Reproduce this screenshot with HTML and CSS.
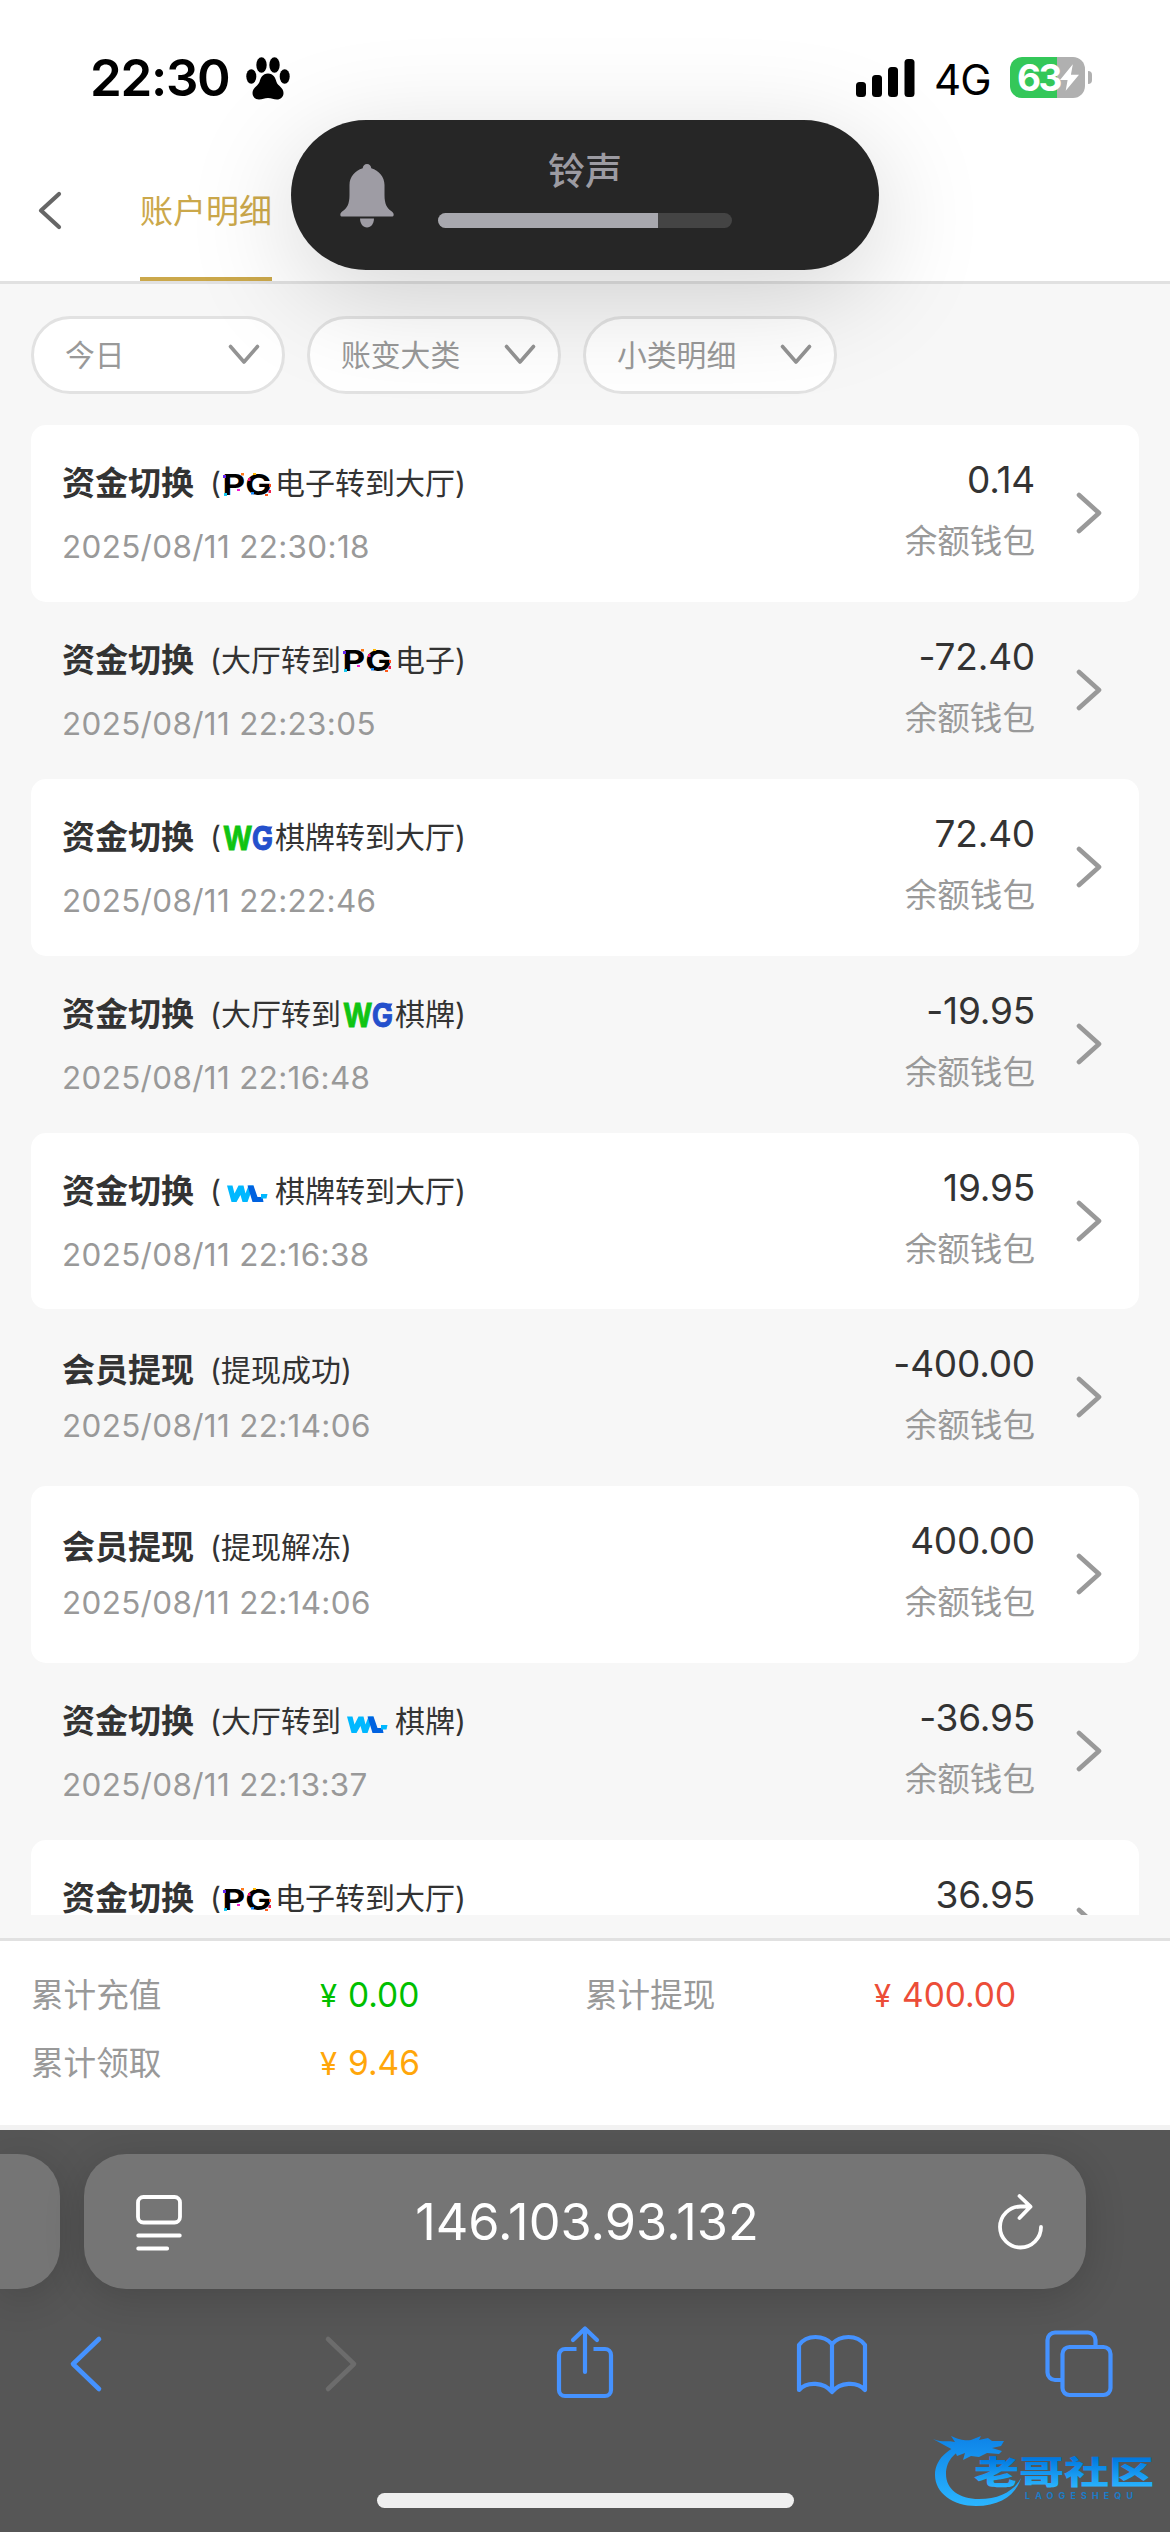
FILE: index.html
```html
<!DOCTYPE html>
<html lang="zh-CN">
<head>
<meta charset="utf-8">
<title>账户明细</title>
<link rel="stylesheet" href="styles.css">
</head>
<body>
<svg class="defs" width="0" height="0" aria-hidden="true">
  <defs>
    <linearGradient id="gw" x1="0" y1="0" x2="1" y2="0"><stop offset="0" stop-color="#12d812"/><stop offset="1" stop-color="#0aa80e"/></linearGradient>
    <linearGradient id="gg" x1="0" y1="0" x2="1" y2="1"><stop offset="0" stop-color="#1533b4"/><stop offset="1" stop-color="#3470ea"/></linearGradient>
    <linearGradient id="gm" gradientUnits="userSpaceOnUse" x1="0" y1="0" x2="0" y2="76"><stop offset="0" stop-color="#0a7fe6"/><stop offset="1" stop-color="#2bb5ff"/></linearGradient>
    <linearGradient id="gt" gradientUnits="userSpaceOnUse" x1="0" y1="28" x2="0" y2="58"><stop offset="0" stop-color="#0078e0"/><stop offset="1" stop-color="#2bb5ff"/></linearGradient>
  </defs>
  <symbol id="pg-dots" viewBox="0 0 50 32">
    <rect x="0" y="6" width="3" height="3" fill="#6a28f0"/><rect x="18" y="4" width="3" height="2.500" fill="#ff7a1a"/>
    <rect x="1" y="24" width="3" height="3" fill="#18c8f0"/><rect x="14" y="20" width="3" height="2" fill="#f01ad0"/>
    <rect x="30" y="4" width="3" height="2" fill="#ffb800"/><rect x="25" y="9" width="2.500" height="3" fill="#f0188c"/>
    <rect x="28" y="23" width="3" height="2.500" fill="#1a8cff"/><rect x="42" y="25" width="3" height="2" fill="#ff5a1a"/><rect x="46" y="15" width="2" height="3" fill="#ff4a1a"/><rect x="45.500" y="21" width="2.500" height="3" fill="#f0204c"/>
  </symbol>
  <symbol id="wl" viewBox="0 0 50 32">
    <path d="M4 9.500h5.500l2 8 4-8h5l2 8 3-8h5l-6 16.500h-5l-2-7-4 7H8.500z" fill="#00b8ff"/>
    <path d="M24.500 9.500h6l4 11.500h5l1 5H29.500z" fill="#0062e0"/>
    <path d="M38 18h6.500l-1 4.500H38z" fill="#00b8ff"/>
  </symbol>
  <symbol id="next" viewBox="0 0 26 42"><path d="M3 3l20 18L3 39" fill="none" stroke="#999" stroke-width="4.600" stroke-linecap="round" stroke-linejoin="round"/></symbol>
  <symbol id="down" viewBox="0 0 32 22"><path d="M2.500 2.500l13.500 15.500L29.500 2.500" fill="none" stroke="#939393" stroke-width="3.600" stroke-linecap="round" stroke-linejoin="round"/></symbol>
</svg>

<div class="status">
  <span class="time">22:30</span>
  <svg class="paw" viewBox="0 0 44 43"><ellipse cx="15.500" cy="8" rx="5.200" ry="7.800"/><ellipse cx="28.500" cy="8" rx="5.200" ry="7.800"/><ellipse cx="5.300" cy="19.500" rx="5" ry="7.300"/><ellipse cx="38.700" cy="19.500" rx="5" ry="7.300"/><path d="M22 16.500c5.500 0 7.500 4.500 8.500 8.500 1.500 4 7 5.500 7 11 0 4-3 6.500-6.500 6.500-3.500 0-5.500-1.500-9-1.500s-5.500 1.500-9 1.500c-3.500 0-6.500-2.500-6.500-6.500 0-5.500 5.500-7 7-11 1-4 3-8.500 8.500-8.500z"/></svg>
  <div class="status-right">
    <svg class="signal" viewBox="0 0 59 38"><rect x="0" y="23" width="10" height="15" rx="3.500"/><rect x="16" y="16" width="10" height="22" rx="3.500"/><rect x="32" y="8" width="10" height="30" rx="3.500"/><rect x="48.500" y="0" width="10" height="38" rx="3.500"/></svg>
    <span class="net">4G</span>
    <div class="battery"><span>63</span><svg viewBox="0 0 20 28"><path d="M13.500 0L0 16.500h8L6 28 20 11h-8.500z" fill="#fff"/></svg></div>
    <i class="nub"></i>
  </div>
</div>

<header class="header">
  <svg class="back" viewBox="0 0 26 42"><path d="M22 4L4 20.500 22 37" fill="none" stroke="#666" stroke-width="4.200" stroke-linecap="round" stroke-linejoin="round"/></svg>
  <span class="tab">账户明细</span>
</header>

<div class="filters">
  <div class="filter"><span>今日</span><svg><use href="#down"/></svg></div>
  <div class="filter"><span>账变大类</span><svg><use href="#down"/></svg></div>
  <div class="filter"><span>小类明细</span><svg><use href="#down"/></svg></div>
</div>

<main class="list">
  <div class="row"><div class="info"><div class="title"><b>资金切换</b><span>(</span><svg class="brand pg" viewBox="0 0 50 32"><text x="-0.500" y="26" textLength="49" lengthAdjust="spacingAndGlyphs">PG</text><use href="#pg-dots"/></svg><span>电子转到大厅)</span></div><div class="date">2025/08/11 22:30:18</div></div><div class="sum"><div class="amount">0.14</div><div class="wallet">余额钱包</div></div><svg class="next"><use href="#next"/></svg></div>
  <div class="row"><div class="info"><div class="title"><b>资金切换</b><span>(大厅转到</span><svg class="brand pg" viewBox="0 0 50 32"><text x="-0.500" y="26" textLength="49" lengthAdjust="spacingAndGlyphs">PG</text><use href="#pg-dots"/></svg><span>电子)</span></div><div class="date">2025/08/11 22:23:05</div></div><div class="sum"><div class="amount">-72.40</div><div class="wallet">余额钱包</div></div><svg class="next"><use href="#next"/></svg></div>
  <div class="row"><div class="info"><div class="title"><b>资金切换</b><span>(</span><svg class="brand wg" viewBox="0 0 50 32"><text x="0" y="28" textLength="50" lengthAdjust="spacingAndGlyphs"><tspan class="w">W</tspan><tspan class="g">G</tspan></text><path d="M38 4.500h11.500l-2 4h-9.500z" fill="#2450cc"/></svg><span>棋牌转到大厅)</span></div><div class="date">2025/08/11 22:22:46</div></div><div class="sum"><div class="amount">72.40</div><div class="wallet">余额钱包</div></div><svg class="next"><use href="#next"/></svg></div>
  <div class="row"><div class="info"><div class="title"><b>资金切换</b><span>(大厅转到</span><svg class="brand wg" viewBox="0 0 50 32"><text x="0" y="28" textLength="50" lengthAdjust="spacingAndGlyphs"><tspan class="w">W</tspan><tspan class="g">G</tspan></text><path d="M38 4.500h11.500l-2 4h-9.500z" fill="#2450cc"/></svg><span>棋牌)</span></div><div class="date">2025/08/11 22:16:48</div></div><div class="sum"><div class="amount">-19.95</div><div class="wallet">余额钱包</div></div><svg class="next"><use href="#next"/></svg></div>
  <div class="row"><div class="info"><div class="title"><b>资金切换</b><span>(</span><svg class="brand"><use href="#wl"/></svg><span>棋牌转到大厅)</span></div><div class="date">2025/08/11 22:16:38</div></div><div class="sum"><div class="amount">19.95</div><div class="wallet">余额钱包</div></div><svg class="next"><use href="#next"/></svg></div>
  <div class="row plain"><div class="info"><div class="title"><b>会员提现</b><span>(提现成功)</span></div><div class="date">2025/08/11 22:14:06</div></div><div class="sum"><div class="amount">-400.00</div><div class="wallet">余额钱包</div></div><svg class="next"><use href="#next"/></svg></div>
  <div class="row plain"><div class="info"><div class="title"><b>会员提现</b><span>(提现解冻)</span></div><div class="date">2025/08/11 22:14:06</div></div><div class="sum"><div class="amount">400.00</div><div class="wallet">余额钱包</div></div><svg class="next"><use href="#next"/></svg></div>
  <div class="row"><div class="info"><div class="title"><b>资金切换</b><span>(大厅转到</span><svg class="brand"><use href="#wl"/></svg><span>棋牌)</span></div><div class="date">2025/08/11 22:13:37</div></div><div class="sum"><div class="amount">-36.95</div><div class="wallet">余额钱包</div></div><svg class="next"><use href="#next"/></svg></div>
  <div class="row"><div class="info"><div class="title"><b>资金切换</b><span>(</span><svg class="brand pg" viewBox="0 0 50 32"><text x="-0.500" y="26" textLength="49" lengthAdjust="spacingAndGlyphs">PG</text><use href="#pg-dots"/></svg><span>电子转到大厅)</span></div></div><div class="sum"><div class="amount">36.95</div></div><svg class="next"><use href="#next"/></svg></div>
</main>

<section class="totals">
  <span class="label">累计充值</span><span class="value green"><i>¥</i>0.00</span>
  <span class="label">累计提现</span><span class="value red"><i>¥</i>400.00</span>
  <span class="label">累计领取</span><span class="value orange"><i>¥</i>9.46</span>
</section>

<footer class="browser">
  <div class="tabs">
    <div class="prev-tab"></div>
    <div class="address">
      <svg class="reader" viewBox="0 0 46 56" fill="none" stroke="#fff" stroke-width="3.800" stroke-linecap="round"><rect x="2" y="2" width="42" height="25.500" rx="5.500"/><path d="M2.200 40.500h41.600M2.200 53.500h29"/></svg>
      <span>146.103.93.132</span>
      <svg class="reload" viewBox="0 0 46 56" fill="none" stroke="#fff" stroke-width="3.800" stroke-linecap="round" stroke-linejoin="round"><path d="M43 33A20.500 20.500 0 1 1 22.500 12.500H32M21.500 2L32.500 12.700 21.500 24"/></svg>
    </div>
  </div>
  <nav class="toolbar">
    <svg class="t-back" viewBox="0 0 32 56" fill="none" stroke="#4592ff" stroke-width="4.600" stroke-linecap="round" stroke-linejoin="round"><path d="M29 3L3 28l26 25"/></svg>
    <svg class="t-fwd" viewBox="0 0 32 56" fill="none" stroke="#6c6c6c" stroke-width="4.600" stroke-linecap="round" stroke-linejoin="round"><path d="M3 3l26 25L3 53"/></svg>
    <svg class="t-share" viewBox="0 0 58 74" fill="none" stroke="#4592ff" stroke-width="4.200" stroke-linejoin="round"><path d="M20.500 23H9a6 6 0 0 0-6 6v35a6 6 0 0 0 6 6h40a6 6 0 0 0 6-6V29a6 6 0 0 0-6-6H37.500"/><path d="M29 46V3M17 14L29 2.500 41 14" stroke-linecap="round"/></svg>
    <svg class="t-book" viewBox="0 0 72 62" fill="none" stroke="#4592ff" stroke-width="4.200" stroke-linejoin="round"><path d="M36 10C28 1 11 0 3 11v45c8-9 25-8 33 2 8-10 25-11 33-2V11C61 0 44 1 36 10zM36 10v48"/></svg>
    <svg class="t-tabs" viewBox="0 0 68 68" fill="none" stroke="#4592ff" stroke-width="4.200"><rect x="17.500" y="17" width="48" height="48" rx="7"/><path d="M17 50H10a7.500 7.500 0 0 1-7.500-7.500V10A7.500 7.500 0 0 1 10 2.500h33A7.500 7.500 0 0 1 50.500 10v7"/></svg>
  </nav>
  <div class="home"></div>
</footer>

<aside class="volume">
  <svg class="bell" viewBox="0 0 54 64" fill="#9e9ca4"><path d="M27 0c2.500 0 4 1.700 4.300 4.300C39 6.500 44.500 13 44.500 21v10c0 9 2.500 13 6 15.500 2 1.500 3.200 2.500 3.200 4.200 0 1.300-.8 1.800-2.200 1.800h-49C1.100 52.500.3 52 .3 50.700c0-1.700 1.200-2.700 3.200-4.200 3.500-2.500 6-6.500 6-15.500V21c0-8 5.500-14.500 13.200-16.700C23 1.700 24.500 0 27 0z"/><path d="M20 54.500h14c0 5-3 9-7 9s-7-4-7-9z"/></svg>
  <div class="volume-main"><span>铃声</span><div class="meter"><i></i></div></div>
</aside>

<svg class="mark" viewBox="0 0 224 78">
  <path d="M42 12C18 14 2 28 2 45c0 18 18 31 41 31 24 0 40-11 45-28-7 13-22 21-42 21C26 69 13 59 13 44c0-14 10-25 30-30z" fill="url(#gm)"/>
  <path d="M0 9c10 4 16 1 22 3l-4-6c9 4 14 5 20 4l10-4-2 4 9-2 4 3 12 0-3 5-9 2 10 3-3 3-12-1-8 4-8-1-8 4 2-7-8 3-2-5z" fill="url(#gm)"/>
  <text class="mark-cn" x="41" y="54" textLength="180" lengthAdjust="spacingAndGlyphs" fill="url(#gt)">老哥社区</text>
  <text class="mark-en" x="92" y="68.500" textLength="108" fill="#1b7cc8">LAOGESHEQU</text>
</svg>
</body>
</html>
```
FILE: styles.css
```css
* { box-sizing: border-box; }
body {
  margin: 0; width: 1170px; height: 2532px; overflow: hidden; position: relative;
  display: flex; flex-direction: column; background: #f7f7f7;
  font-family: Inter, "Noto Sans CJK SC", sans-serif; color: #333;
}
svg { display: block; flex: none; overflow: visible; }
.defs { position: absolute; }
i { font-style: normal; }

.status { flex: none; height: 150px; padding: 50px 78px 0 90px; display: flex; align-items: flex-start; background: #fff; color: #000; }
.time { width: 156px; font-size: 51px; font-weight: 600; line-height: 56px; letter-spacing: -1.3px; white-space: nowrap; }
.paw { width: 44px; height: 43px; margin-top: 7px; }
.status-right { margin-left: auto; display: flex; }
.signal { width: 59px; height: 38px; margin: 9px 19px 0 0; }
.net { width: 76px; font-size: 42px; line-height: 60px; letter-spacing: -1px; }
.battery { width: 75px; height: 41px; margin-top: 7px; border-radius: 12px; padding-left: 7px; display: flex; align-items: center; background: linear-gradient(90deg, #34c759 47px, #b0b0b0 47px); color: #fff; }
.battery span { font-size: 37px; font-weight: 700; line-height: 41px; letter-spacing: -2.5px; width: 43px; }
.battery svg { width: 19px; height: 29px; }
.nub { width: 4px; height: 13px; margin: 21px 0 0 3px; border-radius: 0 4px 4px 0; background: #b0b0b0; }

.header { flex: none; height: 134px; padding-left: 37px; display: flex; border-bottom: 3px solid #e1e1e1; background: #fff; }
.back { width: 26px; height: 42px; margin-top: 40px; }
.tab { margin-left: 77px; height: 131px; border-bottom: 4px solid #cba84b; font-size: 33px; line-height: 123px; color: #cba84b; }

.filters { flex: none; height: 141px; padding: 32px 31px 0; display: flex; gap: 22px; }
.filter { width: 254px; height: 78px; padding: 0 22px 0 31px; display: flex; justify-content: space-between; align-items: center; border: 3px solid #e2e2e2; border-radius: 39px; background: #fff; color: #999; font-size: 29.800px; line-height: 70px; }
.filter svg { width: 32px; height: 22px; }

.list { flex: none; height: 1490px; margin: 0 31px; overflow: hidden; }
.row { height: 176.88px; padding: 0 37px 0 31px; display: flex; border-radius: 15px; }
.row:nth-child(odd) { background: #fff; }
.info { flex: 1; padding-top: 36px; }
.title { height: 44px; display: flex; align-items: center; font-size: 30px; line-height: 44px; white-space: nowrap; }
.title b { font-size: 33px; margin-right: 16px; }
.brand { width: 50px; height: 32px; margin: 3px 2px 0 2px; }
.date { margin-top: 22px; font-size: 31.400px; line-height: 40px; letter-spacing: 0.35px; color: #999; }
.plain .info { padding-top: 39px; }
.plain .date { margin-top: 14px; }
.sum { padding-top: 31px; text-align: right; }
.amount { font-size: 37px; line-height: 48px; letter-spacing: -0.2px; }
.wallet { margin-top: 13px; font-size: 32.600px; line-height: 48px; color: #999; }
.next { width: 26px; height: 42px; margin: 67px 0 0 41px; }

.totals { flex: none; height: 192px; margin-top: 23px; padding: 22px 31px 0; display: grid; grid-template-columns: 289px 265px 289px 1fr; grid-auto-rows: 68px; border-top: 3px solid #e1e1e1; background: linear-gradient(#fff 184px, #f2f2f2 184px); font-size: 32.600px; line-height: 64px; }
.label { color: #999; }
.value { font-size: 33.500px; display: flex; }
.value i { width: 28px; font-size: 31px; line-height: 65px; }
.green { color: #00bf00; }
.red { color: #ec4d38; }
.orange { color: #ffa60a; }

.browser { flex: 1; padding-top: 24px; background: #565656; overflow: hidden; }
.tabs { display: flex; gap: 24px; }
.prev-tab { width: 60px; height: 135px; border-radius: 0 42px 42px 0; background: #757575; box-shadow: 0 8px 40px rgba(0,0,0,.16); }
.address { width: 1002px; height: 135px; padding: 0 42px 0 52px; display: flex; align-items: center; justify-content: space-between; border-radius: 42px; background: #757575; box-shadow: 0 8px 40px rgba(0,0,0,.16); color: #fff; font-size: 50.500px; }
.address span { margin-left: -6px; line-height: 60px; }
.reader, .reload { width: 46px; height: 56px; }
.reader { margin-top: 2px; }
.toolbar { height: 204px; padding: 37px 56px 0 70px; display: flex; align-items: flex-start; }
.t-back, .t-fwd { width: 32px; height: 56px; margin-top: 10px; }
.t-fwd { margin-left: 223px; }
.t-share { width: 58px; height: 74px; margin-left: 199px; }
.t-book { width: 72px; height: 62px; margin: 8px 0 0 182px; }
.t-tabs { width: 68px; height: 68px; margin: 4px 0 0 177px; }
.home { width: 417px; height: 15px; margin-left: 377px; border-radius: 8px; background: #efefef; }

.volume { position: absolute; left: 291px; top: 120px; width: 588px; height: 150px; padding: 0 147px 0 49px; display: flex; border-radius: 75px; background: #262626; box-shadow: 0 24px 110px rgba(0,0,0,.17); }
.bell { width: 54px; height: 64px; margin-top: 44px; }
.volume-main { width: 294px; margin-left: 44px; padding-top: 27px; text-align: center; font-size: 37px; font-weight: 500; line-height: 50px; color: #9c9ba2; }
.meter { height: 15px; margin-top: 16px; border-radius: 8px; background: #444; overflow: hidden; }
.meter i { display: block; width: 220px; height: 15px; background: #a8a8ae; }

.pg text { font: 700 29px Inter, sans-serif; fill: #000; }
.wg text { font: 700 32px Inter, sans-serif; stroke-width: .8px; }
.w { fill: #0fc413; stroke: #0fc413; }
.g { fill: #2450cc; stroke: #2450cc; }
.mark { position: absolute; left: 933px; top: 2430px; width: 224px; height: 78px; }
.mark-cn { font: 900 32px "Noto Sans CJK SC", sans-serif; }
.mark-en { font: 700 9px Inter, sans-serif; }
```
